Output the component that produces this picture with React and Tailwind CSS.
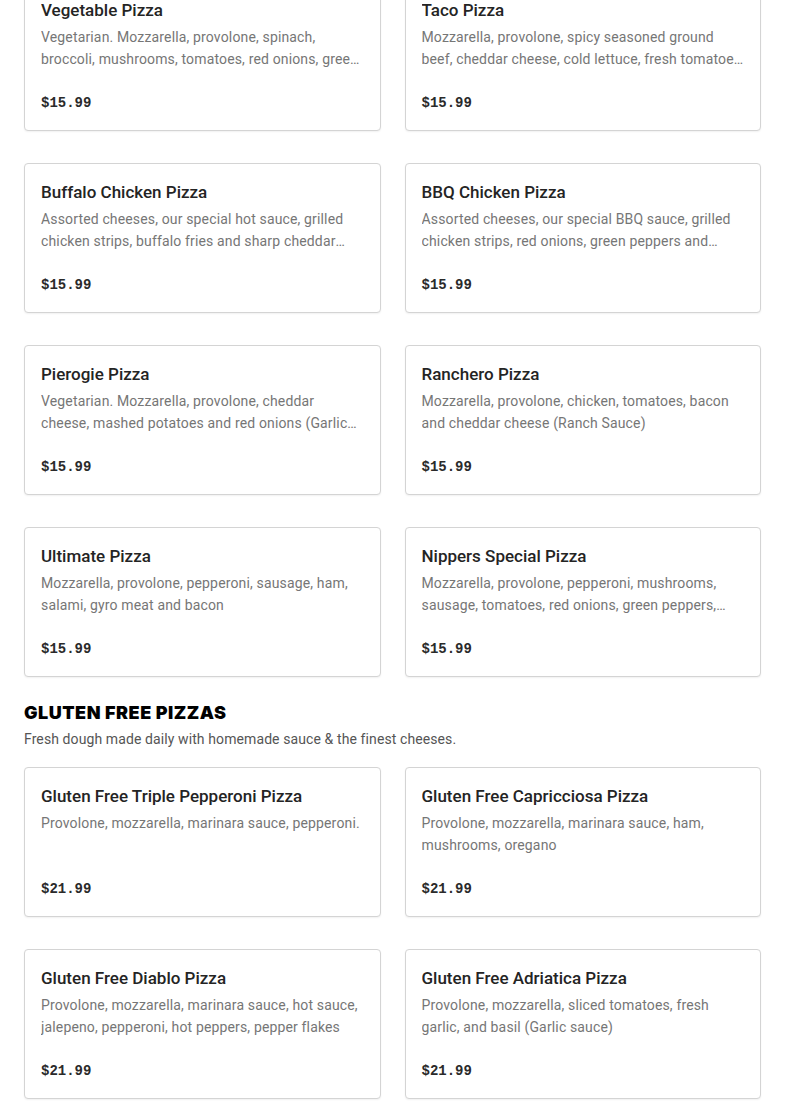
const PIZZAS = [
  { name: "Vegetable Pizza", desc: "Vegetarian. Mozzarella, provolone, spinach, broccoli, mushrooms, tomatoes, red onions, green peppers and black olives", price: "$15.99" },
  { name: "Taco Pizza", desc: "Mozzarella, provolone, spicy seasoned ground beef, cheddar cheese, cold lettuce, fresh tomatoes and taco sauce", price: "$15.99" },
  { name: "Buffalo Chicken Pizza", desc: "Assorted cheeses, our special hot sauce, grilled chicken strips, buffalo fries and sharp cheddar cheese", price: "$15.99" },
  { name: "BBQ Chicken Pizza", desc: "Assorted cheeses, our special BBQ sauce, grilled chicken strips, red onions, green peppers and bacon", price: "$15.99" },
  { name: "Pierogie Pizza", desc: "Vegetarian. Mozzarella, provolone, cheddar cheese, mashed potatoes and red onions (Garlic sauce)", price: "$15.99" },
  { name: "Ranchero Pizza", desc: "Mozzarella, provolone, chicken, tomatoes, bacon and cheddar cheese (Ranch Sauce)", price: "$15.99" },
  { name: "Ultimate Pizza", desc: "Mozzarella, provolone, pepperoni, sausage, ham, salami, gyro meat and bacon", price: "$15.99" },
  { name: "Nippers Special Pizza", desc: "Mozzarella, provolone, pepperoni, mushrooms, sausage, tomatoes, red onions, green peppers, black olives", price: "$15.99" },
];

const GLUTEN_FREE = [
  { name: "Gluten Free Triple Pepperoni Pizza", desc: "Provolone, mozzarella, marinara sauce, pepperoni.", price: "$21.99" },
  { name: "Gluten Free Capricciosa Pizza", desc: "Provolone, mozzarella, marinara sauce, ham, mushrooms, oregano", price: "$21.99" },
  { name: "Gluten Free Diablo Pizza", desc: "Provolone, mozzarella, marinara sauce, hot sauce, jalepeno, pepperoni, hot peppers, pepper flakes", price: "$21.99" },
  { name: "Gluten Free Adriatica Pizza", desc: "Provolone, mozzarella, sliced tomatoes, fresh garlic, and basil (Garlic sauce)", price: "$21.99" },
];

function ItemCard({ item }) {
  return (
    <div className="h-[150px] rounded-[4px] border border-[#d4d4d4] bg-white px-4 pt-4 shadow-[0_1px_2px_rgba(0,0,0,0.06)]">
      <h3 className="text-[17px] leading-[24px] font-medium text-[#242424] truncate">{item.name}</h3>
      <p className="mt-[4px] h-[44px] text-[14px] leading-[22px] tracking-[0.15px] text-[#767676] line-clamp-2">{item.desc}</p>
      <div className="mt-[21px] text-[14px] leading-[24px] font-bold text-[#2a2a2a] font-['Liberation_Mono',monospace]">{item.price}</div>
    </div>
  );
}

export default function App() {
  return (
    <div className="min-h-[1111px] bg-white font-['Roboto',sans-serif] overflow-hidden">
      <div className="px-6 -mt-[19px]">
        <div className="grid grid-cols-2 gap-x-6 gap-y-8">
          {PIZZAS.map((p) => <ItemCard key={p.name} item={p} />)}
        </div>

        <div className="mt-[24px]">
          <h2 className="text-[18px] leading-[24px] font-black tracking-[0.5px] text-black uppercase font-['Inter',sans-serif]">Gluten Free Pizzas</h2>
          <p className="mt-[4px] text-[14px] leading-[20px] tracking-[0.1px] text-[#555]">Fresh dough made daily with homemade sauce &amp; the finest cheeses.</p>
        </div>

        <div className="mt-[18px] grid grid-cols-2 gap-x-6 gap-y-8 pb-4">
          {GLUTEN_FREE.map((p) => <ItemCard key={p.name} item={p} />)}
        </div>
      </div>
    </div>
  );
}
